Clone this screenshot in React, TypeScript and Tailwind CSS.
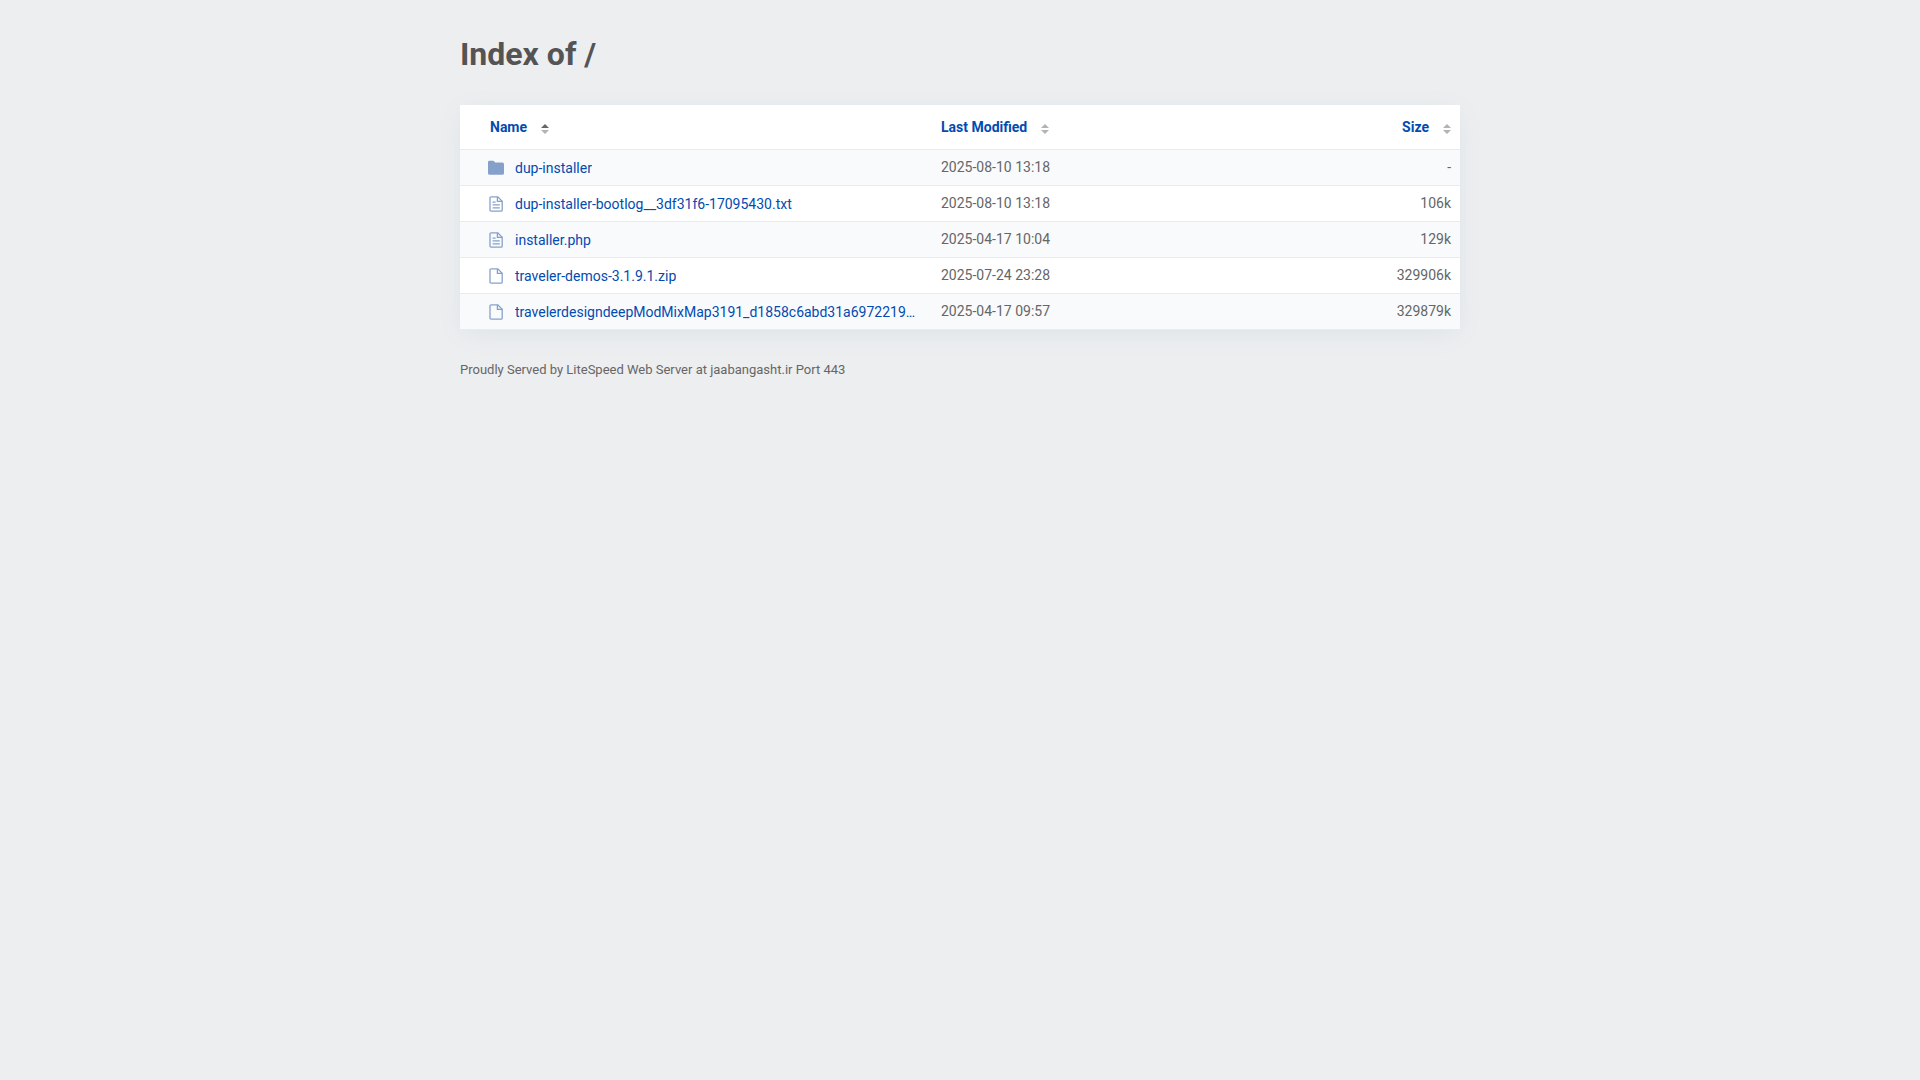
type Kind = 'folder' | 'text' | 'file'

type Entry = { name: string; kind: Kind; modified: string; size: string }

const entries: Entry[] = [
  { name: 'dup-installer', kind: 'folder', modified: '2025-08-10 13:18', size: '-' },
  { name: 'dup-installer-bootlog__3df31f6-17095430.txt', kind: 'text', modified: '2025-08-10 13:18', size: '106k' },
  { name: 'installer.php', kind: 'text', modified: '2025-04-17 10:04', size: '129k' },
  { name: 'traveler-demos-3.1.9.1.zip', kind: 'file', modified: '2025-07-24 23:28', size: '329906k' },
  { name: 'travelerdesigndeepModMixMap3191_d1858c6abd31a6972219…', kind: 'file', modified: '2025-04-17 09:57', size: '329879k' },
]

function EntryIcon({ kind }: { kind: Kind }) {
  if (kind === 'folder') {
    return (
      <svg className="size-4 shrink-0" viewBox="0 0 16 16" fill="#86a1c9" aria-hidden="true">
        <path d="M0 2.2Q0 .8 1.4 .8H5.2Q5.8 .8 6.2 1.4L7.2 2.6H14.4Q16 2.6 16 4.2V13.2Q16 14.8 14.4 14.8H1.6Q0 14.8 0 13.2Z" />
      </svg>
    )
  }
  return (
    <svg className="size-4 shrink-0" viewBox="0 0 16 16" fill="none" stroke="#86a1c9" strokeWidth="1.3" aria-hidden="true">
      <path d="M3.2 .8H9.8L14.2 5.2V14Q14.2 15.2 13 15.2H3.2Q2 15.2 2 14V2Q2 .8 3.2 .8Z" />
      <path d="M9.4 1V5.4H14.2" />
      {kind === 'text' && <path d="M4.6 6.2H7.6M4.6 8.8H11.8M4.6 11.8H11.8" />}
    </svg>
  )
}

function SortIcon({ active = false }: { active?: boolean }) {
  return (
    <svg className="mt-1 h-2.5 w-2" viewBox="0 0 8 10" aria-hidden="true">
      <path d="M4 0L8 4H0Z" fill={active ? '#666666' : '#b3b3b3'} />
      <path d="M4 10L0 6H8Z" fill="#b3b3b3" />
    </svg>
  )
}

function SortButton({ label, active }: { label: string; active?: boolean }) {
  return (
    <button type="button" className="inline-flex cursor-pointer items-center gap-3.5 align-middle font-bold text-[#024bb0]">
      {label}
      <SortIcon active={active} />
    </button>
  )
}

export default function App() {
  return (
    <div className="min-h-screen bg-[#edeef0] px-5 font-['Roboto',sans-serif] text-sm text-[#666666]">
      <main className="mx-auto max-w-[1000px] pt-8">
        <h1 className="text-[32px] leading-[45px] font-bold text-[#545454]">Index of /</h1>
        <table className="mt-7 w-full table-fixed border-collapse border-b border-[#e9ecef] bg-white shadow-[0_5px_25px_-4px_#d9e1e3]">
          <colgroup>
            <col className="w-[47%]" />
            <col />
            <col className="w-[20%]" />
          </colgroup>
          <thead>
            <tr className="h-11">
              <th scope="col" className="pl-[30px] text-left" aria-sort="ascending">
                <SortButton label="Name" active />
              </th>
              <th scope="col" className="pl-[11px] text-left">
                <SortButton label="Last Modified" />
              </th>
              <th scope="col" className="pr-[9px] text-right">
                <SortButton label="Size" />
              </th>
            </tr>
          </thead>
          <tbody>
            {entries.map((e) => (
              <tr key={e.name} className="h-9 border-t border-[#e9ecef] odd:bg-[#f9fafc]">
                <td className="pt-0.5 pr-2 pb-0 pl-7">
                  <a href="#" className="flex items-center gap-[11px] text-[#024bb0] hover:underline">
                    <EntryIcon kind={e.kind} />
                    <span className="truncate">{e.name}</span>
                  </a>
                </td>
                <td className="py-0 pl-[11px]">{e.modified}</td>
                <td className="py-0 pr-[9px] text-right">{e.size}</td>
              </tr>
            ))}
          </tbody>
        </table>
        <footer className="mt-[30px] text-[13px] leading-5">Proudly Served by LiteSpeed Web Server at jaabangasht.ir Port 443</footer>
      </main>
    </div>
  )
}
